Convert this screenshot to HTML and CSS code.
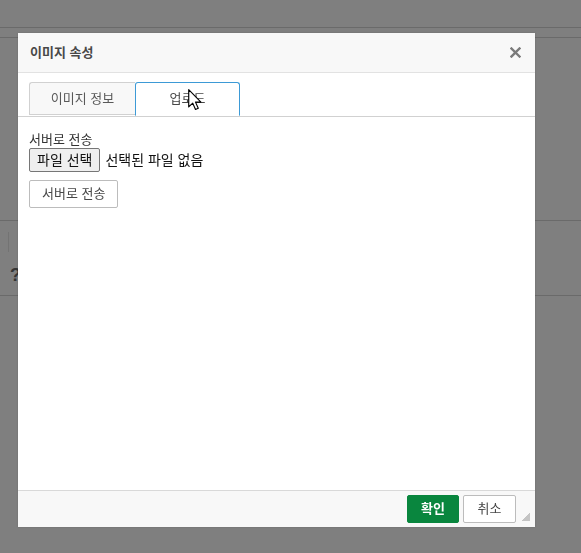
FILE: index.html
```html
<!DOCTYPE html>
<html lang="ko">
<head>
    <meta charset="UTF-8">
    <meta name="viewport" content="width=device-width, initial-scale=1.0">
    <title>이미지 속성</title>
    <link rel="stylesheet" href="styles.css">
</head>
<body>
    <!-- 뒤쪽 편집기 화면 -->
    <div class="page">
        <div class="topbar"></div>
        <div class="toolbar"></div>
        <div class="editor">
            <div class="editor-tools">
                <span class="sep"></span>
                <span class="help">?</span>
            </div>
        </div>
    </div>
    <div class="shade"></div>

    <!-- 이미지 속성 대화상자 -->
    <div class="dialog">
        <div class="dialog-title">
            <span>이미지 속성</span>
            <svg class="close" width="11" height="11" viewBox="0 0 11 11">
                <path d="M1.5 1.5 L9.5 9.5 M9.5 1.5 L1.5 9.5" stroke="#7a7a7a" stroke-width="2.4" stroke-linecap="square"/>
            </svg>
        </div>
        <div class="tabs">
            <div class="tab">이미지 정보</div>
            <div class="tab active">업로드</div>
        </div>
        <div class="dialog-body">
            <div class="label">서버로 전송</div>
            <div class="file-row">
                <span class="file-btn">파일 선택</span>
                <span class="file-name">선택된 파일 없음</span>
            </div>
            <button class="btn upload">서버로 전송</button>
        </div>
        <div class="dialog-footer">
            <button class="btn ok">확인</button>
            <button class="btn cancel">취소</button>
        </div>
        <span class="grip"></span>
    </div>

    <!-- 마우스 포인터 -->
    <svg class="pointer" width="15" height="23" viewBox="0 0 13 20">
        <path d="M0.6 0.6 L0.6 15.6 L4.1 12.3 L6.5 17.8 L8.9 16.8 L6.5 11.4 L11.2 11.4 Z" fill="#fff" stroke="#000" stroke-width="1" stroke-linejoin="round"/>
    </svg>
</body>
</html>
```

FILE: styles.css
```css
body {
    margin: 0;
    background-color: #fff;
    font-family: "Liberation Sans", "Noto Sans CJK KR", sans-serif;
    color: #333;
}
.page {
    height: 553px;
    overflow: hidden;
}
.topbar {
    height: 27px;
    border-bottom: 1px solid #d4d4d4;
}
.toolbar {
    height: 9px;
    border-bottom: 1px solid #d4d4d4;
}
.editor {
    margin-top: 182px;
    border-top: 1px solid #d4d4d4;
}
.editor-tools {
    height: 74px;
    display: flow-root;
    border-bottom: 1px solid #d4d4d4;
}
.sep {
    display: block;
    width: 1px;
    height: 20px;
    margin: 11px 0 0 8px;
    background-color: #e6e6e6;
}
.help {
    display: block;
    margin: 14px 0 0 10px;
    font-size: 18px;
    font-weight: bold;
    line-height: 18px;
    color: #6a6a6a;
}
.shade {
    position: fixed;
    inset: 0;
    background-color: rgba(0, 0, 0, 0.5);
}

/* 대화상자 */
.dialog {
    position: absolute;
    left: 18px;
    top: 33px;
    width: 517px;
    height: 494px;
    display: flex;
    flex-direction: column;
    background-color: #fff;
    box-shadow: 0 0 2px rgba(0, 0, 0, 0.15);
}
.dialog-title {
    height: 39px;
    display: flex;
    align-items: center;
    justify-content: space-between;
    padding: 0 14px 0 12px;
    background-color: #f8f8f8;
    border-bottom: 1px solid #e2e2e2;
    font-size: 13px;
    font-weight: bold;
    line-height: 16px;
    color: #484848;
}
.close {
    margin-top: -1px;
}
.tabs {
    height: 34px;
    display: flex;
    padding: 9px 0 0 11px;
    border-bottom: 1px solid #d1d1d1;
}
.tab {
    width: 106px;
    height: 33px;
    box-sizing: border-box;
    margin-bottom: -1px;
    border: 1px solid #d1d1d1;
    border-right: none;
    border-radius: 3px 0 0 0;
    background-color: #f8f8f8;
    font-size: 13px;
    line-height: 32px;
    text-align: center;
    color: #595959;
}
.tab.active {
    width: 105px;
    height: 34px;
    border: 1px solid #3d9ad6;
    border-bottom-color: #fff;
    border-radius: 3px 3px 0 0;
    background-color: #fff;
    color: #484848;
}
.dialog-body {
    padding: 15px 11px 0;
}
.label {
    font-size: 13px;
    line-height: 16px;
    color: #333;
}
.file-row {
    display: flex;
    align-items: center;
    gap: 5px;
    font-size: 14px;
}
.file-btn {
    height: 24px;
    box-sizing: border-box;
    padding: 0 7px;
    border: 1px solid #767676;
    border-radius: 2px;
    background-color: #efefef;
    line-height: 22px;
    color: #111;
}
.file-name {
    line-height: 22px;
    color: #111;
}
.btn {
    height: 28px;
    box-sizing: border-box;
    border: 1px solid #bcbcbc;
    border-radius: 2px;
    background-color: #fff;
    font-family: inherit;
    font-size: 13px;
    line-height: 26px;
    color: #484848;
}
.upload {
    display: block;
    margin-top: 8px;
    padding: 0 12px;
}
.dialog-footer {
    margin-top: auto;
    height: 37px;
    display: flex;
    justify-content: flex-end;
    gap: 4px;
    padding: 4px 19px 0 0;
    box-sizing: border-box;
    border-top: 1px solid #d9d9d9;
    background-color: #f8f8f8;
}
.ok {
    width: 52px;
    padding: 0;
    border-color: #09863e;
    background-color: #09863e;
    font-weight: bold;
    color: #fff;
}
.cancel {
    width: 53px;
    padding: 0;
}
.grip {
    position: absolute;
    right: 5px;
    bottom: 6px;
    width: 9px;
    height: 9px;
    background: linear-gradient(135deg, transparent 50%, #c4c4c4 50%);
}
.pointer {
    position: absolute;
    left: 188px;
    top: 89px;
}
```
